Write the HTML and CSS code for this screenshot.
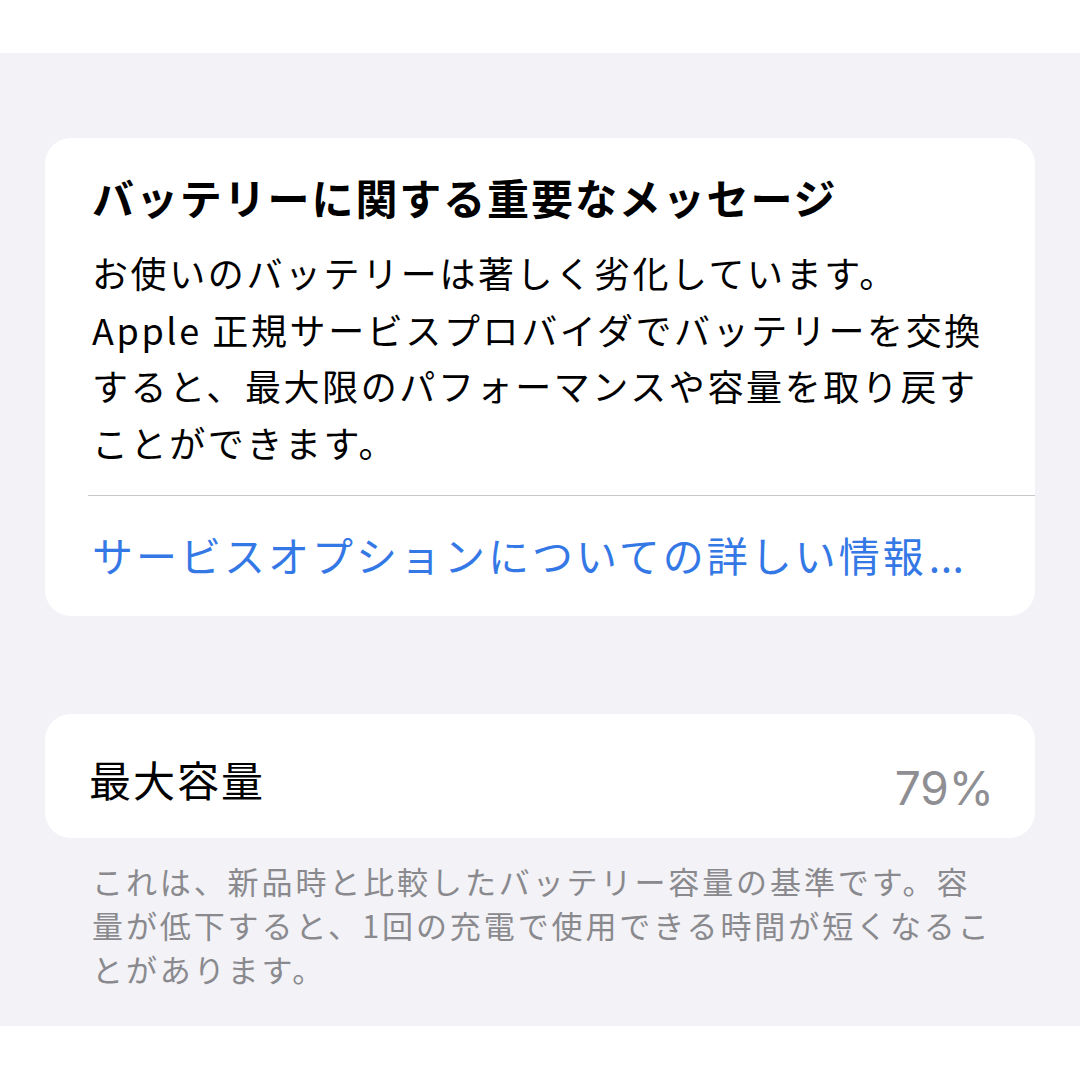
FILE: index.html
```html
<!DOCTYPE html>
<html lang="ja">
<head>
<meta charset="utf-8">
<link rel="stylesheet" href="styles.css">
</head>
<body>
<div class="top"></div>
<main class="main">
  <section class="card card-msg">
    <h1 class="title">バッテリーに関する重要なメッセージ</h1>
    <p class="body">お使いのバッテリーは著しく劣化しています。<br>Apple 正規サービスプロバイダでバッテリーを交換<br>すると、最大限のパフォーマンスや容量を取り戻す<br>ことができます。</p>
    <div class="divider"></div>
    <a class="link">サービスオプションについての詳しい情報<span class="ellipsis">...</span></a>
  </section>
  <section class="card card-row">
    <span class="label">最大容量</span>
    <span class="value">79%</span>
  </section>
  <p class="footer">これは、新品時と比較したバッテリー容量の基準です。容<br>量が低下すると、1回の充電で使用できる時間が短くなるこ<br>とがあります。</p>
</main>
<div class="bottom"></div>
</body>
</html>
```
FILE: styles.css
```css
html, body {
  margin: 0;
  padding: 0;
  background: #ffffff;
  font-family: "Noto Sans CJK JP", "Noto Sans", sans-serif;
  color: #000;
}
.top {
  height: 53px;
  background: #fff;
}
.main {
  background: #f2f2f7;
  height: 973px;
  box-sizing: border-box;
  padding: 85px 45px 0 45px;
  display: flex;
  flex-direction: column;
}
.bottom {
  height: 54px;
  background: #fff;
}
.card {
  background: #fff;
  border-radius: 26px;
}
.card-msg {
  padding: 31px 30px 34px 47px;
  display: flex;
  flex-direction: column;
}
.title {
  margin: 0;
  font-size: 42px;
  font-weight: 700;
  letter-spacing: 1.9px;
  line-height: 56px;
  white-space: nowrap;
}
.body {
  margin: 19px 0 0 0;
  font-size: 36px;
  letter-spacing: 2.6px;
  line-height: 56.5px;
  white-space: nowrap;
}
.divider {
  height: 1px;
  background: #c8c7cc;
  margin: 25px -30px 0 -4px;
}
.link {
  margin-top: 30px;
  font-size: 41px;
  letter-spacing: 3px;
  line-height: 56px;
  color: #3478e6;
  white-space: nowrap;
}
.ellipsis {
  letter-spacing: 0.5px;
  margin-left: 2px;
}
.card-row {
  margin-top: 98px;
  height: 124px;
  padding: 4px 41px 0 44px;
  box-sizing: border-box;
  display: flex;
  align-items: center;
  justify-content: space-between;
}
.label {
  font-size: 42px;
  letter-spacing: 2px;
}
.value {
  font-family: Inter, "Liberation Sans", sans-serif;
  font-size: 46px;
  color: #8e8e93;
  padding-top: 20px;
}
.footer {
  margin: 21px 0 0 47px;
  font-size: 31px;
  letter-spacing: 2.9px;
  line-height: 44px;
  color: #8a8a8e;
  white-space: nowrap;
}
```
